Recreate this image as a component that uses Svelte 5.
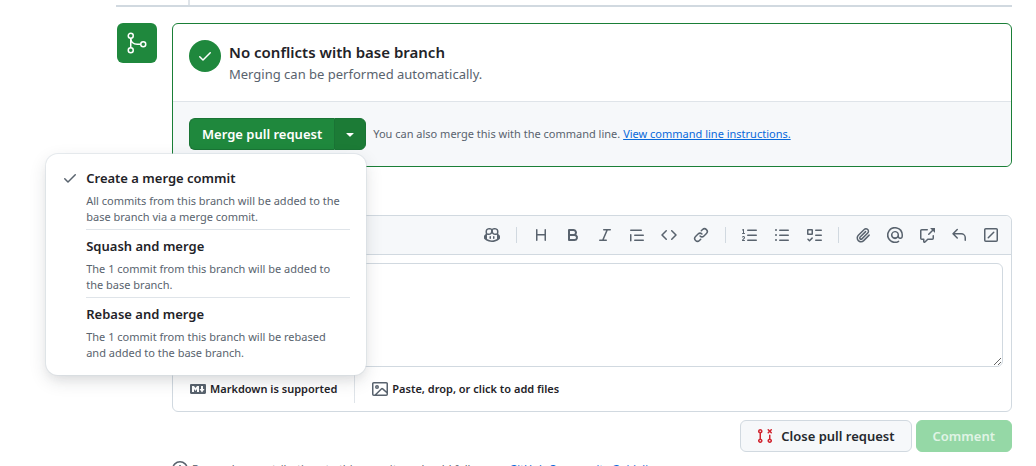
<script>
  const paths = {
    check: 'M13.78 4.22a.75.75 0 0 1 0 1.06l-7.25 7.25a.75.75 0 0 1-1.06 0L2.22 9.28a.751.751 0 0 1 .018-1.042.751.751 0 0 1 1.042-.018L6 10.94l6.72-6.72a.75.75 0 0 1 1.06 0Z',
    triangle: 'm4.427 7.427 3.396 3.396a.25.25 0 0 0 .354 0l3.396-3.396A.25.25 0 0 0 11.396 7H4.604a.25.25 0 0 0-.177.427Z',
    copilot: 'M7.998 15.035c-4.562 0-7.873-2.914-7.998-3.749V9.338c.085-.628.677-1.686 1.588-2.065.013-.07.024-.143.036-.218.029-.183.06-.384.126-.612-.201-.508-.254-1.084-.254-1.656 0-.87.128-1.769.693-2.484.579-.733 1.494-1.124 2.724-1.261 1.206-.134 2.262.034 2.944.765.05.053.096.108.139.165.044-.057.094-.112.143-.165.682-.731 1.738-.899 2.944-.765 1.23.137 2.145.528 2.724 1.261.566.715.693 1.614.693 2.484 0 .572-.053 1.148-.254 1.656.066.228.098.429.126.612.012.076.024.148.037.218.924.385 1.522 1.471 1.591 2.095v1.872c0 .766-3.351 3.795-8.002 3.795Zm0-1.485c2.28 0 4.584-1.11 5.002-1.433V7.862l-.023-.116c-.49.21-1.075.291-1.727.291-1.146 0-2.059-.327-2.71-.991A3.222 3.222 0 0 1 8 6.303a3.24 3.24 0 0 1-.544.743c-.65.664-1.563.991-2.71.991-.652 0-1.236-.081-1.727-.291l-.023.116v4.255c.419.323 2.722 1.433 5.002 1.433ZM6.762 2.83c-.193-.206-.637-.413-1.682-.297-1.019.113-1.479.404-1.713.7-.247.312-.369.789-.369 1.554 0 .793.129 1.171.308 1.371.162.181.519.379 1.442.379.853 0 1.339-.235 1.638-.54.315-.322.527-.827.617-1.553.117-.935-.037-1.395-.241-1.614Zm4.155-.297c-1.044-.116-1.488.091-1.681.297-.204.219-.359.679-.242 1.614.091.726.303 1.231.618 1.553.299.305.784.54 1.638.54.922 0 1.28-.198 1.442-.379.179-.2.308-.578.308-1.371 0-.765-.123-1.242-.37-1.554-.233-.296-.693-.587-1.713-.7ZM6.25 9.037a.75.75 0 0 1 .75.75v1.501a.75.75 0 0 1-1.5 0V9.787a.75.75 0 0 1 .75-.75Zm4.25.75v1.501a.75.75 0 0 1-1.5 0V9.787a.75.75 0 0 1 1.5 0Z',
    heading: 'M3.75 2a.75.75 0 0 1 .75.75V7h7V2.75a.75.75 0 0 1 1.5 0v10.5a.75.75 0 0 1-1.5 0V8.5h-7v4.75a.75.75 0 0 1-1.5 0V2.75A.75.75 0 0 1 3.75 2Z',
    bold: 'M4 2h4.5a3.501 3.501 0 0 1 2.852 5.53A3.499 3.499 0 0 1 9.5 14H4a1 1 0 0 1-1-1V3a1 1 0 0 1 1-1Zm1 7v3h4.5a1.5 1.5 0 0 0 0-3Zm3.5-2a1.5 1.5 0 0 0 0-3H5v3Z',
    italic: 'M6 2.75A.75.75 0 0 1 6.75 2h6.5a.75.75 0 0 1 0 1.5h-2.505l-3.858 9H9.25a.75.75 0 0 1 0 1.5h-6.5a.75.75 0 0 1 0-1.5h2.505l3.858-9H6.75A.75.75 0 0 1 6 2.75Z',
    quote: 'M1.75 2.5h10.5a.75.75 0 0 1 0 1.5H1.75a.75.75 0 0 1 0-1.5Zm4 5h8.5a.75.75 0 0 1 0 1.5h-8.5a.75.75 0 0 1 0-1.5Zm0 5h8.5a.75.75 0 0 1 0 1.5h-8.5a.75.75 0 0 1 0-1.5ZM2.5 7.75v6a.75.75 0 0 1-1.5 0v-6a.75.75 0 0 1 1.5 0Z',
    code: 'm11.28 3.22 4.25 4.25a.75.75 0 0 1 0 1.06l-4.25 4.25a.749.749 0 0 1-1.275-.326.749.749 0 0 1 .215-.734L13.94 8l-3.72-3.72a.749.749 0 0 1 .326-1.275.749.749 0 0 1 .734.215Zm-6.56 0a.751.751 0 0 1 1.042.018.751.751 0 0 1 .018 1.042L2.06 8l3.72 3.72a.749.749 0 0 1-.326 1.275.749.749 0 0 1-.734-.215L.47 8.53a.75.75 0 0 1 0-1.06Z',
    link: 'm7.775 3.275 1.25-1.25a3.5 3.5 0 1 1 4.95 4.95l-2.5 2.5a3.5 3.5 0 0 1-4.95 0 .751.751 0 0 1 .018-1.042.751.751 0 0 1 1.042-.018 1.998 1.998 0 0 0 2.83 0l2.5-2.5a2.002 2.002 0 0 0-2.83-2.83l-1.25 1.25a.751.751 0 0 1-1.042-.018.751.751 0 0 1-.018-1.042Zm-4.69 9.64a1.998 1.998 0 0 0 2.83 0l1.25-1.25a.751.751 0 0 1 1.042.018.751.751 0 0 1 .018 1.042l-1.25 1.25a3.5 3.5 0 1 1-4.95-4.95l2.5-2.5a3.5 3.5 0 0 1 4.95 0 .751.751 0 0 1-.018 1.042.751.751 0 0 1-1.042.018 1.998 1.998 0 0 0-2.83 0l-2.5 2.5a1.998 1.998 0 0 0 0 2.83Z',
    ordered: 'M5 3.25a.75.75 0 0 1 .75-.75h8.5a.75.75 0 0 1 0 1.5h-8.5A.75.75 0 0 1 5 3.25Zm0 5a.75.75 0 0 1 .75-.75h8.5a.75.75 0 0 1 0 1.5h-8.5A.75.75 0 0 1 5 8.25Zm0 5a.75.75 0 0 1 .75-.75h8.5a.75.75 0 0 1 0 1.5h-8.5a.75.75 0 0 1-.75-.75ZM.924 10.32a.5.5 0 0 1-.851-.525l.001-.001.001-.002.002-.004.007-.011c.097-.144.215-.273.348-.384.228-.19.588-.392 1.068-.392.468 0 .858.181 1.126.484.259.294.377.673.377 1.038 0 .987-.686 1.495-1.156 1.845l-.047.035c-.303.225-.522.4-.654.597h1.357a.5.5 0 0 1 0 1H.5a.5.5 0 0 1-.5-.5c0-1.005.692-1.52 1.167-1.875l.035-.025c.531-.396.8-.625.8-1.078a.57.57 0 0 0-.128-.376C1.806 10.068 1.695 10 1.5 10a.658.658 0 0 0-.429.163.835.835 0 0 0-.144.153ZM2.003 2.5V6h.503a.5.5 0 0 1 0 1H.5a.5.5 0 0 1 0-1h.503V3.308l-.28.14a.5.5 0 0 1-.446-.895l1.003-.5a.5.5 0 0 1 .723.447Z',
    unordered: 'M5.75 2.5h8.5a.75.75 0 0 1 0 1.5h-8.5a.75.75 0 0 1 0-1.5Zm0 5h8.5a.75.75 0 0 1 0 1.5h-8.5a.75.75 0 0 1 0-1.5Zm0 5h8.5a.75.75 0 0 1 0 1.5h-8.5a.75.75 0 0 1 0-1.5ZM2 14a1 1 0 1 1 0-2 1 1 0 0 1 0 2Zm1-6a1 1 0 1 1-2 0 1 1 0 0 1 2 0ZM2 4a1 1 0 1 1 0-2 1 1 0 0 1 0 2Z',
    tasks: 'M2 2h4a1 1 0 0 1 1 1v4a1 1 0 0 1-1 1H2a1 1 0 0 1-1-1V3a1 1 0 0 1 1-1Zm4.655 8.595a.75.75 0 0 1 0 1.06L4.03 14.28a.75.75 0 0 1-1.06 0l-1.5-1.5a.749.749 0 0 1 .326-1.275.749.749 0 0 1 .734.215l.97.97 2.095-2.095a.75.75 0 0 1 1.06 0ZM9.75 2.5h5.5a.75.75 0 0 1 0 1.5h-5.5a.75.75 0 0 1 0-1.5Zm0 5h5.5a.75.75 0 0 1 0 1.5h-5.5a.75.75 0 0 1 0-1.5Zm0 5h5.5a.75.75 0 0 1 0 1.5h-5.5a.75.75 0 0 1 0-1.5Zm-7.25-9v3h3v-3Z',
    clip: 'M12.212 3.02a1.753 1.753 0 0 0-2.478.003l-5.83 5.83a3.007 3.007 0 0 0-.88 2.127c0 .795.315 1.551.88 2.116.567.567 1.333.89 2.126.89.79 0 1.548-.321 2.116-.89l5.48-5.48a.75.75 0 0 1 1.061 1.06l-5.48 5.48a4.492 4.492 0 0 1-3.177 1.33c-1.2 0-2.345-.487-3.187-1.33a4.483 4.483 0 0 1-1.32-3.177c0-1.195.475-2.341 1.32-3.186l5.83-5.83a3.25 3.25 0 0 1 5.553 2.297c0 .863-.343 1.691-.953 2.301L7.439 12.39c-.375.377-.884.59-1.416.593a1.998 1.998 0 0 1-1.412-.593 1.992 1.992 0 0 1 0-2.828l5.48-5.48a.751.751 0 0 1 1.042.018.751.751 0 0 1 .018 1.042l-5.48 5.48a.492.492 0 0 0 0 .707.499.499 0 0 0 .352.154.51.51 0 0 0 .356-.154l5.833-5.827a1.755 1.755 0 0 0 0-2.481Z',
    mention: 'M4.75 2.37a6.501 6.501 0 0 0 6.5 11.26.75.75 0 0 1 .75 1.298A7.999 7.999 0 0 1 .989 4.148 8 8 0 0 1 16 7.75v1.5a2.75 2.75 0 0 1-5.072 1.475 3.999 3.999 0 0 1-6.65-4.19A4 4 0 0 1 12 7.75v1.5a1.25 1.25 0 0 0 2.5 0V7.867a6.5 6.5 0 0 0-9.75-5.496ZM10.5 7.75a2.5 2.5 0 1 0-5 0 2.5 2.5 0 0 0 5 0Z',
    crossref: 'M2.75 3.5a.25.25 0 0 0-.25.25v7.5c0 .138.112.25.25.25h2a.75.75 0 0 1 .75.75v2.19l2.72-2.72a.749.749 0 0 1 .53-.22h4.5a.25.25 0 0 0 .25-.25v-2.5a.75.75 0 0 1 1.5 0v2.5A1.75 1.75 0 0 1 13.25 13H9.06l-2.573 2.573A1.458 1.458 0 0 1 4 14.543V13H2.75A1.75 1.75 0 0 1 1 11.25v-7.5C1 2.784 1.784 2 2.75 2h5.5a.75.75 0 0 1 0 1.5ZM16 1.25v4.146a.25.25 0 0 1-.427.177L14.03 4.03l-3.75 3.75a.749.749 0 0 1-1.275-.326.749.749 0 0 1 .215-.734l3.75-3.75-1.543-1.543A.25.25 0 0 1 11.604 1h4.146a.25.25 0 0 1 .25.25Z',
    reply: 'M6.78 1.97a.75.75 0 0 1 0 1.06L3.81 6h6.44A4.75 4.75 0 0 1 15 10.75v2.5a.75.75 0 0 1-1.5 0v-2.5a3.25 3.25 0 0 0-3.25-3.25H3.81l2.97 2.97a.749.749 0 0 1-.326 1.275.749.749 0 0 1-.734-.215L1.47 7.28a.75.75 0 0 1 0-1.06l4.25-4.25a.75.75 0 0 1 1.06 0Z',
    slash: 'M2.75 1h10.5c.966 0 1.75.784 1.75 1.75v10.5A1.75 1.75 0 0 1 13.25 15H2.75A1.75 1.75 0 0 1 1 13.25V2.75C1 1.784 1.784 1 2.75 1Zm0 1.5a.25.25 0 0 0-.25.25v10.5c0 .138.112.25.25.25h10.5a.25.25 0 0 0 .25-.25V2.75a.25.25 0 0 0-.25-.25ZM11.28 4.72a.75.75 0 0 1 0 1.06l-5.5 5.5a.75.75 0 0 1-1.06-1.06l5.5-5.5a.75.75 0 0 1 1.06 0Z',
    markdown: 'M14.85 3c.63 0 1.15.52 1.14 1.15v7.7c0 .63-.51 1.15-1.15 1.15H1.15C.52 13 0 12.48 0 11.84V4.15C0 3.52.52 3 1.15 3ZM9 11V5H7L5.5 7 4 5H2v6h2V8l1.5 1.92L7 8v3Zm2.99.5L14.5 8H13V5h-2v3H9.5Z',
    image: 'M16 13.25A1.75 1.75 0 0 1 14.25 15H1.75A1.75 1.75 0 0 1 0 13.25V2.75C0 1.784.784 1 1.75 1h12.5c.966 0 1.75.784 1.75 1.75ZM1.75 2.5a.25.25 0 0 0-.25.25v10.5c0 .138.112.25.25.25h.94l.03-.03 6.077-6.078a1.75 1.75 0 0 1 2.412-.06L14.5 10.31V2.75a.25.25 0 0 0-.25-.25Zm12.5 11a.25.25 0 0 0 .25-.25v-.917l-4.298-3.889a.25.25 0 0 0-.344.009L4.81 13.5ZM7 6a2 2 0 1 1-3.999.001A2 2 0 0 1 7 6ZM5.5 6a.5.5 0 1 0-1 0 .5.5 0 0 0 1 0Z',
    closed: 'M3.25 1A2.25 2.25 0 0 1 4 5.372v5.256a2.251 2.251 0 1 1-1.5 0V5.372A2.251 2.251 0 0 1 3.25 1Zm9.5 5.5a.75.75 0 0 1 .75.75v3.378a2.251 2.251 0 1 1-1.5 0V7.25a.75.75 0 0 1 .75-.75Zm-2.03-5.273a.75.75 0 0 1 1.06 0l.97.97.97-.97a.748.748 0 0 1 1.265.332.75.75 0 0 1-.205.729l-.97.97.97.97a.751.751 0 0 1-.018 1.042.751.751 0 0 1-1.042.018l-.97-.97-.97.97a.749.749 0 0 1-1.275-.326.749.749 0 0 1 .215-.734l.97-.97-.97-.97a.75.75 0 0 1 0-1.06ZM2.5 3.25a.75.75 0 1 0 1.5 0 .75.75 0 0 0-1.5 0ZM3.25 12a.75.75 0 1 0 0 1.5.75.75 0 0 0 0-1.5Zm9.5 0a.75.75 0 1 0 0 1.5.75.75 0 0 0 0-1.5Z',
    info: 'M0 8a8 8 0 1 1 16 0A8 8 0 0 1 0 8Zm8-6.5a6.5 6.5 0 1 0 0 13 6.5 6.5 0 0 0 0-13ZM6.5 7.75A.75.75 0 0 1 7.25 7h1a.75.75 0 0 1 .75.75v2.75h.25a.75.75 0 0 1 0 1.5h-2a.75.75 0 0 1 0-1.5h.25v-2h-.25a.75.75 0 0 1-.75-.75ZM8 6a1 1 0 1 1 0-2 1 1 0 0 1 0 2Z'
  };

  const groups = [
    [['copilot', 'Copilot']],
    [['heading', 'Heading'], ['bold', 'Bold'], ['italic', 'Italic'], ['quote', 'Quote'], ['code', 'Code'], ['link', 'Link']],
    [['ordered', 'Numbered list'], ['unordered', 'Unordered list'], ['tasks', 'Task list']],
    [['clip', 'Attach files'], ['mention', 'Mention'], ['crossref', 'Reference'], ['reply', 'Saved replies'], ['slash', 'Slash commands']]
  ];

  const methods = [
    { title: 'Create a merge commit', text: 'All commits from this branch will be added to the base branch via a merge commit.' },
    { title: 'Squash and merge', text: 'The 1 commit from this branch will be added to the base branch.' },
    { title: 'Rebase and merge', text: 'The 1 commit from this branch will be rebased and added to the base branch.' }
  ];

  let selected = $state(0);
  let open = $state(true);
  let comment = $state('');
</script>

{#snippet icon(name)}
  <svg class="icon" viewBox="0 0 16 16" width="16" height="16" aria-hidden="true"><path fill-rule="evenodd" d={paths[name]} /></svg>
{/snippet}

<main>
  <div class="timeline-end"></div>

  <section class="merge">
    <div class="badge">
      <svg viewBox="0 0 24 24" width="24" height="24" fill="none" stroke="currentColor" stroke-width="1.5" aria-hidden="true">
        <circle cx="5.75" cy="4.75" r="2.5" />
        <circle cx="5.75" cy="19.25" r="2.5" />
        <circle cx="18.25" cy="13.25" r="2.5" />
        <path d="M5.75 7.25v9.5M5.75 7.25c.3 3.7 2.9 6 6.5 6h3.5" />
      </svg>
    </div>
    <div class="merge-box">
      <div class="status">
        <span class="ok">{@render icon('check')}</span>
        <div>
          <h3>No conflicts with base branch</h3>
          <p>Merging can be performed automatically.</p>
        </div>
      </div>
      <div class="actions">
        <div class="split">
          <button class="primary" type="button">Merge pull request</button>
          <button class="caret" type="button" aria-label="Select merge method" aria-expanded={open} onclick={() => (open = !open)}>{@render icon('triangle')}</button>
          {#if open}
            <div class="menu" role="menu">
              {#each methods as m, i}
                <button class="item" type="button" role="menuitemradio" aria-checked={selected === i} onclick={() => (selected = i)}>
                  <span class="tick">{#if selected === i}{@render icon('check')}{/if}</span>
                  <span class="body">
                    <span class="item-title">{m.title}</span>
                    <span class="item-text">{m.text}</span>
                  </span>
                </button>
              {/each}
            </div>
          {/if}
        </div>
        <p class="hint">You can also merge this with the command line. <a href="#instructions">View command line instructions.</a></p>
      </div>
    </div>
  </section>

  <form onsubmit={(e) => e.preventDefault()}>
    <div class="editor">
      <div class="toolbar" role="toolbar" aria-label="Formatting">
        {#each groups as group, g}
          {#if g > 0}<span class="sep"></span>{/if}
          {#each group as [name, label]}
            <button class="tool" type="button" aria-label={label}>{@render icon(name)}</button>
          {/each}
        {/each}
      </div>
      <div class="field"><textarea aria-label="Add a comment" bind:value={comment}></textarea></div>
      <div class="extras">
        <a class="extra" href="#markdown">{@render icon('markdown')}Markdown is supported</a>
        <span class="rule"></span>
        <button class="extra" type="button">{@render icon('image')}Paste, drop, or click to add files</button>
      </div>
    </div>
    <div class="submit">
      <button class="close" type="button">{@render icon('closed')}Close pull request</button>
      <button class="comment" type="submit" disabled={!comment}>Comment</button>
    </div>
    <p class="note">{@render icon('info')}<span>Remember, contributions to this repository should follow our <a href="#guidelines">GitHub Community Guidelines</a>.</span></p>
  </form>
</main>

<style>
  :global(body) { background: #fff; }
  main, button, textarea { font-family: "Noto Sans", "Liberation Sans", sans-serif; }
  main {
    box-sizing: border-box;
    height: 100vh;
    overflow: hidden;
    padding: 0 24px 0 116px;
    color: #1f2328;
    font-size: 13px;
    line-height: 20px;
  }
  h3, p { margin: 0; }
  button { margin: 0; cursor: pointer; }
  a { color: #0969da; }
  .icon { display: block; flex: none; fill: currentColor; }

  .timeline-end { display: flex; height: 5px; border-bottom: 2px solid #d1d9e0; }
  .timeline-end::before { content: ""; width: 2px; margin-left: 72px; background: #dfe4e9; }

  .merge { display: flex; align-items: flex-start; gap: 15px; padding-top: 16px; }
  .badge {
    display: grid;
    place-items: center;
    flex: none;
    width: 40px;
    height: 40px;
    margin-left: 1px;
    border-radius: 6px;
    background: #1f883d;
    color: #fff;
  }
  .merge-box { flex: 1; border: 1px solid #1a7f37; border-radius: 6px; }
  .status { display: flex; gap: 8px; padding: 16px; }
  .status h3 { font-size: 15px; line-height: 24px; font-weight: 600; }
  .status p { color: #59636e; line-height: 21px; }
  .ok {
    display: grid;
    place-items: center;
    flex: none;
    width: 32px;
    height: 32px;
    border-radius: 50%;
    background: #1f883d;
    color: #fff;
  }
  .actions {
    display: flex;
    align-items: center;
    gap: 7px;
    padding: 16px;
    border-top: 1px solid #dfe4e9;
    border-radius: 0 0 6px 6px;
    background: #f6f8fa;
  }
  .split { position: relative; display: flex; flex: none; }
  .primary, .caret {
    height: 32px;
    border: 1px solid #1a7435;
    background: #1f883d;
    color: #fff;
    font-size: 13px;
    font-weight: 600;
  }
  .primary { padding: 0 12px; border-right: 0; border-radius: 6px 0 0 6px; }
  .caret { display: grid; place-items: center; width: 32px; padding: 0; border-radius: 0 6px 6px 0; background: #1c7b36; }
  .hint { color: #59636e; font-size: 11px; }

  .menu {
    position: absolute;
    z-index: 2;
    top: 36px;
    right: 0;
    box-sizing: border-box;
    width: 320px;
    padding: 8px 16px 10px;
    border-radius: 12px;
    background: #fff;
    box-shadow: 0 0 0 1px #d1d9e080, 0 6px 12px -3px #25292e14, 0 6px 18px 0 #25292e1f;
  }
  .item {
    display: flex;
    gap: 8px;
    width: 100%;
    padding: 0;
    border: 0;
    background: none;
    color: inherit;
    text-align: left;
  }
  .tick { width: 16px; padding-top: 8px; color: #59636e; }
  .body { flex: 1; display: flex; flex-direction: column; gap: 3px; padding: 4px 0; }
  .item + .item .body { border-top: 1px solid #dfe4e9; }
  .item-title { font-size: 13px; line-height: 20px; font-weight: 600; padding: 2px 0; }
  .item-text { padding-right: 4px; color: #59636e; font-size: 11px; line-height: 16px; }

  form { padding: 48px 0 0 56px; }
  .editor { border: 1px solid #d1d9e0; border-radius: 6px; }
  .toolbar {
    display: flex;
    align-items: center;
    justify-content: flex-end;
    padding: 3px 4px;
    border-bottom: 1px solid #d1d9e0;
    border-radius: 6px 6px 0 0;
    background: #f6f8fa;
    color: #59636e;
  }
  .tool { display: grid; place-items: center; width: 32px; height: 32px; padding: 0; border: 0; background: none; color: inherit; }
  .sep { width: 1px; height: 16px; margin: 0 8px; background: #d1d9e0; }
  .field { padding: 8px 8px 0; }
  textarea {
    display: block;
    box-sizing: border-box;
    width: 100%;
    height: 104px;
    padding: 8px;
    border: 1px solid #d1d9e0;
    border-radius: 6px;
    background: #fff;
    font-size: 13px;
    line-height: 20px;
    resize: vertical;
  }
  .extras { display: flex; align-items: center; gap: 17px; padding: 8px 17px; }
  .extra {
    display: flex;
    align-items: center;
    gap: 4px;
    padding: 0;
    border: 0;
    background: none;
    color: #1f2328;
    font-size: 11px;
    font-weight: 600;
    line-height: 20px;
    text-decoration: none;
  }
  .extra .icon { fill: #59636e; }
  .rule { width: 1px; height: 28px; background: #dfe4e9; }

  .submit { display: flex; justify-content: flex-end; gap: 4px; padding-top: 8px; }
  .close, .comment { display: flex; align-items: center; gap: 8px; height: 32px; padding: 0 16px; border-radius: 6px; font-size: 13px; font-weight: 600; }
  .close { border: 1px solid #d1d9e0; background: #f6f8fa; color: #25292e; }
  .close .icon { fill: #d1242f; }
  .comment { border: 1px solid #1f883d; background: #1f883d; color: #fff; }
  .comment:disabled { border-color: #95d8a6; background: #95d8a6; color: #e0f4e5; cursor: default; }
  .note { display: flex; gap: 4px; padding-top: 9px; color: #59636e; font-size: 11px; line-height: 16px; }
</style>
